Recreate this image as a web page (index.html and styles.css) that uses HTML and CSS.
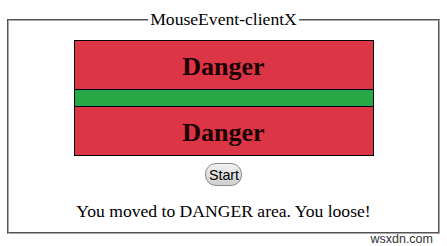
FILE: index.html
```html
<!DOCTYPE html>
<html>
<head>
<meta charset="UTF-8">
<title>MouseEvent clientX</title>
<link rel="stylesheet" href="styles.css">
</head>
<body>

<fieldset class="demo">
  <legend>MouseEvent-clientX</legend>

  <!-- AREAS -->
  <div class="areas" id="areas">
    <div class="danger">Danger</div>
    <div class="safe"></div>
    <div class="danger">Danger</div>
  </div>

  <div class="controls">
    <button class="startbtn" onclick="start()">Start</button>
  </div>

  <p class="result" id="result">You moved to DANGER area. You loose!</p>
</fieldset>

<div class="mark">wsxdn.com</div>

<script>
function start(){
  document.getElementById("result").innerText="Move the mouse inside the green area";
}
</script>
</body>
</html>
```

FILE: styles.css
```css
body{
  margin:0;
  font-family:"Liberation Serif","Times New Roman",serif;
  color:#000; background:#fff;
}
.demo{
  margin:9px 7px 0 7px; padding:10px 0 10px;
  border:2px groove #a8a8a8;
  text-align:center;
}
.demo legend{
  margin:0 auto; padding:0 2px;
  font-size:17.6px;
}
.areas{
  width:298px; margin:0 auto;
  border:1px solid #000;
}
.danger{
  height:48px; line-height:52px;
  background:#dc3545; color:#1a0000;
  font-size:26px; font-weight:bold;
}
.safe{
  height:16px; background:#28a745;
  border-top:1px solid #000; border-bottom:1px solid #000;
}
.controls{margin-top:7px}
.startbtn{
  font-family:"Liberation Sans",Arial,sans-serif; font-size:14.3px;
  height:23px; padding:0 2px 0 3px;
  border:1px solid #8a8a8a; border-radius:11px;
  background:linear-gradient(#f2f2f2,#cfcfcf);
  color:#000;
}
.result{
  margin:15px 0 0; font-size:17.6px;
}
.mark{
  margin-top:-1px;
  text-align:right; padding-right:14px;
  font-family:"Liberation Sans",Arial,sans-serif; font-size:12.5px;
  line-height:12px; color:#333;
}
```
